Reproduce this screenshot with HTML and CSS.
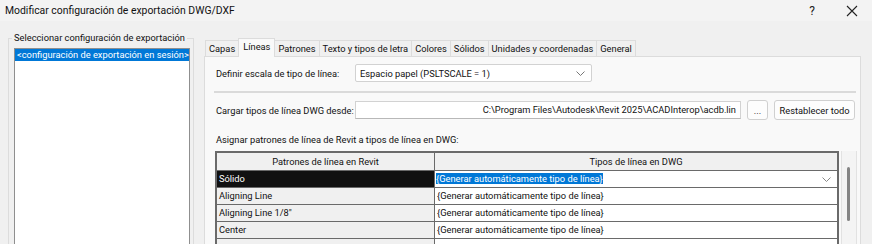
FILE: index.html
```html
<!DOCTYPE html>
<html lang="es">
<head>
    <meta charset="UTF-8">
    <title>Modificar configuración de exportación DWG/DXF</title>
    <link rel="stylesheet" href="styles.css">
</head>
<body>

    <div class="title-bar">
        <span class="title">Modificar configuración de exportación DWG/DXF</span>
        <span class="title-btn help">?</span>
        <span class="title-btn close">
            <svg width="12" height="12" viewBox="0 0 12 12"><path d="M1 1 L11 11 M11 1 L1 11" stroke="#222" stroke-width="1.1" fill="none"/></svg>
        </span>
    </div>

    <div class="dialog">
        <div class="setup-group">
            <div class="group-label">Seleccionar configuración de exportación</div>
            <div class="setup-list">
                <div class="list-item selected">&lt;configuración de exportación en sesión&gt;</div>
            </div>
        </div>

        <div class="tabs-area">
            <div class="tab-strip">
                <span class="tab">Capas</span>
                <span class="tab active">Líneas</span>
                <span class="tab">Patrones</span>
                <span class="tab">Texto y tipos de letra</span>
                <span class="tab">Colores</span>
                <span class="tab">Sólidos</span>
                <span class="tab">Unidades y coordenadas</span>
                <span class="tab">General</span>
            </div>

            <div class="tab-panel">
                <div class="form-row">
                    <span class="row-label">Definir escala de tipo de línea:</span>
                    <div class="combo">
                        <span>Espacio papel (PSLTSCALE = 1)</span>
                        <svg class="chevron" width="9" height="5" viewBox="0 0 9 5"><path d="M0.5 0.5 L4.5 4.5 L8.5 0.5" stroke="#777" fill="none"/></svg>
                    </div>
                </div>

                <div class="separator"></div>

                <div class="form-row">
                    <span class="row-label">Cargar tipos de línea DWG desde:</span>
                    <div class="path-field">C:\Program Files\Autodesk\Revit 2025\ACADInterop\acdb.lin</div>
                    <button class="btn btn-browse">...</button>
                    <button class="btn btn-reset">Restablecer todo</button>
                </div>

                <div class="map-label">Asignar patrones de línea de Revit a tipos de línea en DWG:</div>

                <div class="grid-wrap">
                    <table class="map-table">
                        <tr>
                            <th class="col-revit">Patrones de línea en Revit</th>
                            <th>Tipos de línea en DWG</th>
                        </tr>
                        <tr class="current">
                            <td class="revit-cell">Sólido</td>
                            <td class="dwg-cell">
                                <span class="pick">{Generar automáticamente tipo de línea}</span>
                                <svg class="chevron" width="9" height="5" viewBox="0 0 9 5"><path d="M0.5 0.5 L4.5 4.5 L8.5 0.5" stroke="#888" fill="none"/></svg>
                            </td>
                        </tr>
                        <tr>
                            <td class="revit-cell">Aligning Line</td>
                            <td class="dwg-cell">{Generar automáticamente tipo de línea}</td>
                        </tr>
                        <tr>
                            <td class="revit-cell">Aligning Line 1/8"</td>
                            <td class="dwg-cell">{Generar automáticamente tipo de línea}</td>
                        </tr>
                        <tr>
                            <td class="revit-cell">Center</td>
                            <td class="dwg-cell">{Generar automáticamente tipo de línea}</td>
                        </tr>
                        <tr>
                            <td class="revit-cell"></td>
                            <td class="dwg-cell"></td>
                        </tr>
                    </table>
                    <div class="scroll-track">
                        <div class="scroll-thumb"></div>
                    </div>
                </div>
            </div>
        </div>
    </div>

</body>
</html>
```

FILE: styles.css
```css
body {
    margin: 0;
    width: 872px;
    height: 244px;
    overflow: hidden;
    background-color: #f0f0f0;
    font-family: Roboto, "Liberation Sans", sans-serif;
    font-size: 9.3px;
    color: #111;
}

.title-bar {
    height: 21px;
    display: flex;
    align-items: center;
    background-color: #f3f3f3;
    padding-left: 5px;
}

.title {
    font-size: 10.4px;
    flex: 1;
}

.title-btn {
    width: 40px;
    text-align: center;
    font-size: 12px;
    color: #222;
}

.close {
    display: flex;
    justify-content: center;
}

.dialog {
    display: flex;
    padding-top: 15px;
    height: 208px;
    overflow: hidden;
}

/* left group box */
.setup-group {
    margin: 2px 0 0 8px;
    width: 184px;
    border-top: 1px solid #dcdcdc;
    border-left: 1px solid #dcdcdc;
    border-right: 1px solid #dcdcdc;
    position: relative;
}

.group-label {
    position: absolute;
    top: -7px;
    left: 3px;
    padding: 0 2px;
    background-color: #f0f0f0;
    line-height: 12px;
    white-space: nowrap;
}

.setup-list {
    margin: 9px 3px 0 5px;
    height: 200px;
    background-color: #fff;
    border: 1px solid #8f8f8f;
    border-bottom: none;
}

.list-item {
    height: 12px;
    line-height: 12px;
    padding-left: 2px;
    white-space: nowrap;
}

.list-item.selected {
    background-color: #0078d7;
    color: #fff;
}

/* tabs */
.tabs-area {
    margin-left: 10px;
    width: 657px;
}

.tab-strip {
    display: flex;
    align-items: flex-end;
    height: 20px;
    padding-left: 1px;
}

.tab {
    height: 15px;
    line-height: 15px;
    padding: 0 3px;
    border: 1px solid #dcdcdc;
    border-bottom: none;
    margin-right: -1px;
    background-color: #f0f0f0;
    white-space: nowrap;
}

.tab.active {
    height: 18px;
    line-height: 16px;
    padding: 0 4px;
    background-color: #f9f9f9;
    position: relative;
    top: 1px;
    z-index: 1;
}

.tab-panel {
    height: 200px;
    background-color: #f9f9f9;
    border: 1px solid #dcdcdc;
    border-bottom: none;
    padding: 6px 0 0 11px;
}

.form-row {
    display: flex;
    align-items: center;
    height: 20px;
    white-space: nowrap;
}

.row-label {
    width: 139px;
}

.combo {
    width: 237px;
    height: 18px;
    display: flex;
    align-items: center;
    justify-content: space-between;
    padding: 0 6px 0 4px;
    box-sizing: border-box;
    background-color: #fff;
    border: 1px solid #d2d2d2;
    border-radius: 2px;
}

.separator {
    margin: 8px 4px 7px -2px;
    border-top: 2px solid #dadada;
}

.path-field {
    width: 386px;
    height: 18px;
    line-height: 16px;
    box-sizing: border-box;
    text-align: right;
    padding-right: 4px;
    background-color: #fff;
    border: 1px solid #d2d2d2;
    border-bottom-color: #b8b8b8;
    overflow: hidden;
}

.btn {
    height: 20px;
    font-family: inherit;
    font-size: 9.3px;
    color: #111;
    background-color: #fdfdfd;
    border: 1px solid #d0d0d0;
    border-radius: 3px;
    padding: 0;
}

.btn-browse {
    width: 21px;
    margin-left: 6px;
}

.btn-reset {
    width: 81px;
    margin-left: 6px;
}

.map-label {
    margin-top: 13px;
    height: 14px;
    line-height: 14px;
}

/* mapping table */
.grid-wrap {
    display: flex;
    margin: 4px 0 0 -1px;
}

.map-table {
    width: 624px;
    border-collapse: collapse;
    border: 2px solid #6a6a6a;
    border-bottom: none;
    table-layout: fixed;
}

.map-table th,
.map-table td {
    border: 1px solid #6a6a6a;
    height: 16px;
    line-height: 16px;
    padding: 0 2px;
    white-space: nowrap;
    overflow: hidden;
    font-weight: normal;
}

.map-table th {
    height: 17px;
    background-color: #f0f0f0;
    text-align: center;
}

.col-revit {
    width: 213px;
}

.revit-cell {
    background-color: #f0f0f0;
}

.dwg-cell {
    background-color: #fff;
}

.current .revit-cell {
    background-color: #111;
    color: #fff;
}

.current .dwg-cell {
    position: relative;
    padding-left: 1px;
}

.pick {
    background-color: #0078d7;
    color: #fff;
}

.current .chevron {
    position: absolute;
    right: 6px;
    top: 6px;
}

.scroll-track {
    width: 14px;
    margin-left: 2px;
    height: 100px;
    background-color: #f4f4f4;
    border-left: 1px solid #e2e2e2;
    border-right: 1px solid #e2e2e2;
    position: relative;
}

.scroll-thumb {
    position: absolute;
    left: 5px;
    top: 16px;
    width: 3px;
    height: 54px;
    background-color: #858585;
    border-radius: 2px;
}
```
